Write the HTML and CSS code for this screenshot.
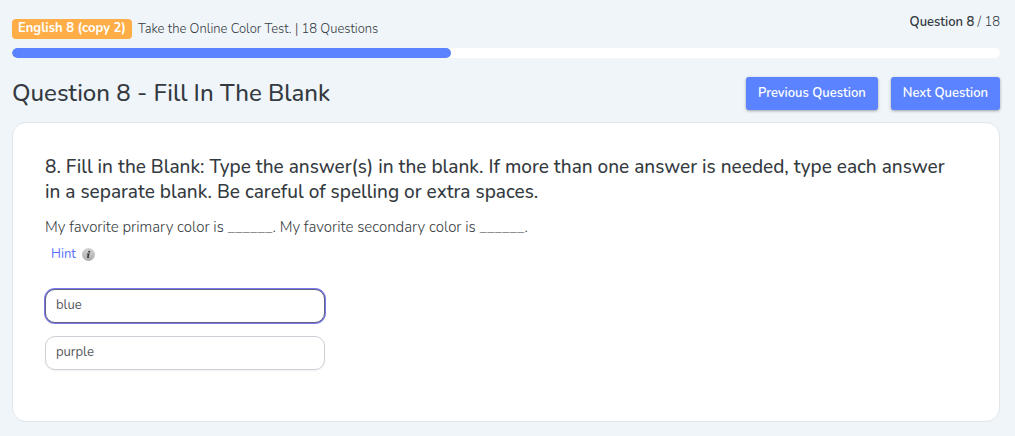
FILE: index.html
```html
<!DOCTYPE html>
<html lang="en">
<head>
<meta charset="utf-8">
<meta name="viewport" content="width=device-width, initial-scale=1">
<title>Question 8 - Fill In The Blank</title>
<link rel="stylesheet" href="styles.css">
</head>
<body>
<main class="quiz">
  <header class="quiz-top">
    <div class="quiz-info">
      <span class="badge">English 8 (copy 2)</span>
      <span>Take the Online Color Test. | 18 Questions</span>
    </div>
    <div class="counter"><strong>Question 8</strong> / 18</div>
  </header>
  <div class="progress" role="progressbar" aria-label="Quiz progress" aria-valuemin="0" aria-valuemax="18" aria-valuenow="8">
    <div class="progress-bar" style="width: 44.4%"></div>
  </div>
  <div class="title-row">
    <h1>Question 8 - Fill In The Blank</h1>
    <div class="actions">
      <button class="btn" type="button">Previous Question</button>
      <button class="btn" type="button">Next Question</button>
    </div>
  </div>
  <section class="card">
    <h2>8. Fill in the Blank: Type the answer(s) in the blank. If more than one answer is needed, type each answer in a separate blank. Be careful of spelling or extra spaces.</h2>
    <p class="prompt">My favorite primary color is ______. My favorite secondary color is ______.</p>
    <button class="hint" type="button">Hint
      <svg class="hint-icon" viewBox="0 0 13 13" aria-hidden="true">
        <defs><linearGradient id="disc" x1="0" y1="0" x2="0" y2="1"><stop offset="0" stop-color="#d2d2d2"/><stop offset="1" stop-color="#aeaeae"/></linearGradient></defs>
        <circle cx="6.5" cy="6.5" r="6.5" fill="url(#disc)"/>
        <circle cx="7.2" cy="3.7" r="1" fill="#333"/>
        <path d="M5 5.6h2.6L6.7 9h.8l-.2.8H4.9L5.7 6.4H4.8z" fill="#333"/>
      </svg>
    </button>
    <div class="answers">
      <input class="answer answer-active" type="text" value="blue" aria-label="Answer 1">
      <input class="answer" type="text" value="purple" aria-label="Answer 2">
    </div>
  </section>
</main>
</body>
</html>
```
FILE: styles.css
```css
* { box-sizing: border-box; }
body {
  margin: 0;
  background: #f0f5fa;
  color: #343a40;
  font: 300 13px/20px Nunito, "Open Sans", sans-serif;
}
.quiz { padding: 12px 15px 14px 12px; }
.quiz-top { display: flex; justify-content: space-between; align-items: flex-start; }
.quiz-info { display: flex; align-items: center; gap: 6px; padding-top: 7px; line-height: 18px; }
.badge {
  padding: 0 6px 2px;
  border-radius: 4px;
  background: #ffad46;
  color: #fff;
  font-weight: 700;
}
.counter strong { font-weight: 600; }
.progress { height: 10px; margin-top: 9px; border-radius: 5px; background: #fff; overflow: hidden; }
.progress-bar { height: 100%; border-radius: 5px; background: #5b83ff; }
.title-row { display: flex; justify-content: space-between; align-items: flex-start; margin: 19px 0 12px; }
h1 { margin: 0; font-size: 24px; font-weight: 500; line-height: 32px; }
.actions { display: flex; gap: 13px; }
.btn {
  height: 33px;
  padding: 0 12px 2px;
  border: 0;
  border-radius: 3px;
  background: #5b83ff;
  color: #fff;
  font: 600 13px/20px Nunito, "Open Sans", sans-serif;
  box-shadow: 0 1px 3px rgba(0, 0, 0, .35);
}
.card {
  padding: 32px 40px 51px 32px;
  border: 1px solid #e2e6ea;
  border-radius: 14px;
  background: #fff;
}
h2 { margin: 0; font-size: 19px; font-weight: 500; line-height: 25px; }
.prompt { margin: 12px 0 7px; font-size: 15px; }
.hint {
  display: flex;
  align-items: center;
  gap: 6px;
  padding: 0 6px;
  border: 0;
  background: none;
  color: #5b70ff;
  font: 400 13px/20px Nunito, "Open Sans", sans-serif;
}
.hint-icon { width: 13px; height: 13px; }
.answers { display: grid; gap: 13px; width: 100%; max-width: 280px; margin-top: 25px; }
.answer {
  width: 100%;
  height: 34px;
  padding: 0 10px 2px;
  border: 1px solid #cfcfd8;
  border-radius: 10px;
  background: #fff;
  color: #54575c;
  font: 400 13px/20px Nunito, "Open Sans", sans-serif;
  box-shadow: 0 1px 2px rgba(0, 0, 0, .06);
}
.answer-active { border-color: #62627c; box-shadow: 0 0 0 1px #7a7af0; }
```
